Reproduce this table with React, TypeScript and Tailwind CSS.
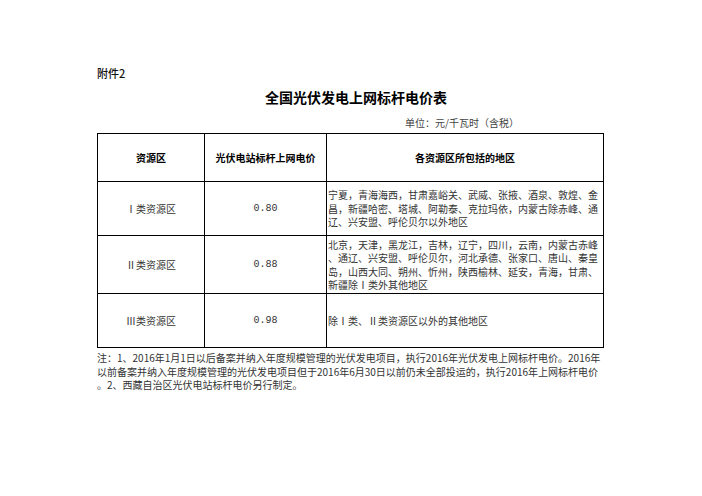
import React from 'react'

const cjk = '[font-family:"Noto_Sans_CJK_SC","Noto_Sans",sans-serif]'

type Row = { zone: string; price: string; areas: string[]; h: string }

const rows: Row[] = [
  {
    zone: 'Ⅰ类资源区',
    price: '0.80',
    h: 'h-[54px]',
    areas: [
      '宁夏，青海海西，甘肃嘉峪关、武威、张掖、酒泉、敦煌、金',
      '昌，新疆哈密、塔城、阿勒泰、克拉玛依，内蒙古除赤峰、通',
      '辽、兴安盟、呼伦贝尔以外地区',
    ],
  },
  {
    zone: 'Ⅱ类资源区',
    price: '0.88',
    h: 'h-[58px]',
    areas: [
      '北京，天津，黑龙江，吉林，辽宁，四川，云南，内蒙古赤峰',
      '、通辽、兴安盟、呼伦贝尔，河北承德、张家口、唐山、秦皇',
      '岛，山西大同、朔州、忻州，陕西榆林、延安，青海，甘肃、',
      '新疆除Ⅰ类外其他地区',
    ],
  },
  {
    zone: 'Ⅲ类资源区',
    price: '0.98',
    h: 'h-[54px]',
    areas: ['除Ⅰ类、Ⅱ类资源区以外的其他地区'],
  },
]

export default function App() {
  return (
    <div className={`min-h-[496px] w-[702px] bg-white ${cjk}`}>
      <div className="ml-[97px] flex w-[506px] flex-col pt-[66px]">
        <div className="h-[14px] text-[11px] leading-[14px] font-medium text-[#111]">附件2</div>
        <div className="mt-[8px] h-[18px] pl-[168px] text-[14px] leading-[18px] font-bold text-black">
          全国光伏发电上网标杆电价表
        </div>
        <div className="mt-[10px] h-[13px] pl-[308px] text-[10px] leading-[13px] text-[#444]">
          单位：元/千瓦时（含税）
        </div>

        <table className="mt-[4px] w-[506px] table-fixed border-collapse text-[10px] leading-[14px]">
          <colgroup>
            <col className="w-[107px]" />
            <col className="w-[122px]" />
            <col className="w-[277px]" />
          </colgroup>
          <thead>
            <tr className="h-[48px] font-bold text-black">
              <th className="border border-black text-center">资源区</th>
              <th className="border border-black text-center">光伏电站标杆上网电价</th>
              <th className="border border-black text-center">各资源区所包括的地区</th>
            </tr>
          </thead>
          <tbody className="text-[#333]">
            {rows.map((r) => (
              <tr key={r.zone} className={r.h}>
                <td className="border border-black text-center">{r.zone}</td>
                <td className="border border-black text-center [font-family:'Liberation_Mono',monospace]">
                  {r.price}
                </td>
                <td className="border border-black px-[1px] align-middle">
                  {r.areas.map((line) => (
                    <div key={line} className="h-[13.5px] whitespace-nowrap leading-[14px]">
                      {line}
                    </div>
                  ))}
                </td>
              </tr>
            ))}
          </tbody>
        </table>

        <div className="mt-[3px] text-[10px] leading-[14px] text-[#333]">
          <div className="h-[13.5px] whitespace-nowrap">
            注：1、2016年1月1日以后备案并纳入年度规模管理的光伏发电项目，执行2016年光伏发电上网标杆电价。2016年
          </div>
          <div className="h-[13.5px] whitespace-nowrap">
            以前备案并纳入年度规模管理的光伏发电项目但于2016年6月30日以前仍未全部投运的，执行2016年上网标杆电价
          </div>
          <div className="h-[13.5px] whitespace-nowrap">。2、西藏自治区光伏电站标杆电价另行制定。</div>
        </div>
      </div>
    </div>
  )
}
